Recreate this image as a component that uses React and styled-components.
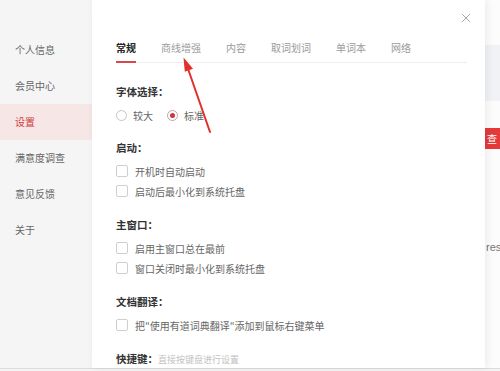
import React from "react";
import styled, { createGlobalStyle } from "styled-components";

const GlobalStyle = createGlobalStyle`
    html, body {
        margin: 0;
        padding: 0;
        background: #fff;
    }
    body {
        font-family: "Noto Sans CJK SC", "Noto Sans", sans-serif;
    }
`;

const Page = styled.div`
    position: relative;
    width: 500px;
    height: 371px;
    overflow: hidden;
    display: flex;
    flex-direction: column;
    background: #fff;
`;

const Main = styled.div`
    display: flex;
    height: 368px;
`;

const Sidebar = styled.div`
    width: 92px;
    flex-shrink: 0;
    background: #f5f5f5;
    padding-top: 32px;
    box-sizing: border-box;
`;

const NavItem = styled.div`
    height: 36px;
    line-height: 36px;
    padding-left: 15px;
    font-size: 10px;
    color: ${props => (props.active ? "#d23a3a" : "#666")};
    background: ${props => (props.active ? "#f6e6e6" : "transparent")};
`;

const Dialog = styled.div`
    position: relative;
    width: 393px;
    flex-shrink: 0;
    background: #fff;
    box-shadow: 2px 0 8px rgba(0, 0, 0, 0.07);
    padding: 0 18px 0 24px;
    box-sizing: border-box;
    z-index: 1;
`;

const Header = styled.div`
    display: flex;
    justify-content: flex-end;
    height: 26px;
    padding-top: 6px;
    box-sizing: border-box;
`;

const Close = styled.div`
    width: 14px;
    height: 14px;
    margin-right: -6px;
`;

const Tabs = styled.div`
    display: flex;
    gap: 25px;
    margin-top: 15px;
    border-bottom: 1px solid #eeeeee;
`;

const Tab = styled.div`
    position: relative;
    font-size: 10px;
    line-height: 14px;
    padding-bottom: 7px;
    color: ${props => (props.active ? "#222" : "#9a9a9a")};
    font-weight: ${props => (props.active ? 700 : 400)};
    &::after {
        content: "";
        position: absolute;
        left: 0;
        right: 0;
        bottom: -1px;
        height: 2px;
        background: ${props => (props.active ? "#d9484a" : "transparent")};
    }
`;

const Section = styled.div`
    margin-top: ${props => props.top}px;
`;

const Title = styled.div`
    font-size: 10.5px;
    line-height: 14px;
    font-weight: 700;
    color: #333;
    margin-bottom: 6px;
`;

const Hint = styled.span`
    font-weight: 400;
    font-size: 9px;
    color: #c2c2c2;
`;

const Row = styled.div`
    display: flex;
    align-items: center;
    height: 20px;
    font-size: 10px;
    color: #666;
`;

const RadioOption = styled.div`
    display: flex;
    align-items: center;
    margin-right: 14px;
`;

const Radio = styled.span`
    width: 11px;
    height: 11px;
    border-radius: 50%;
    border: 1px solid ${props => (props.checked ? "#c8a0a0" : "#c4c4c4")};
    box-sizing: border-box;
    margin-right: 6px;
    display: flex;
    align-items: center;
    justify-content: center;
    &::after {
        content: "";
        width: 5px;
        height: 5px;
        border-radius: 50%;
        background: ${props => (props.checked ? "#c9363b" : "transparent")};
    }
`;

const Checkbox = styled.span`
    width: 12px;
    height: 12px;
    border: 1px solid #cfcfcf;
    border-radius: 2px;
    box-sizing: border-box;
    margin-right: 7px;
`;

const RightStrip = styled.div`
    flex: 1;
    position: relative;
    background: #fcfcfc;
    display: flex;
    flex-direction: column;
`;

const GreyBand = styled.div`
    margin-top: 45px;
    height: 56px;
    background: #f0f2f5;
`;

const RedButton = styled.div`
    margin-top: 27px;
    height: 21px;
    background: #e53a3a;
    color: #fff;
    font-size: 10px;
    line-height: 21px;
    padding-left: 2px;
`;

const CutText = styled.div`
    margin-top: 92px;
    font-family: "Liberation Sans", Arial, sans-serif;
    font-size: 11px;
    color: #777;
    white-space: nowrap;
    overflow: hidden;
    padding-left: 1px;
`;

const BottomBar = styled.div`
    height: 3px;
    border-top: 1px solid #dcdcdc;
    background: #f4f4f4;
`;

const ArrowLayer = styled.svg`
    position: absolute;
    left: 0;
    top: 0;
    pointer-events: none;
    z-index: 5;
`;

const navItems = ["个人信息", "会员中心", "设置", "满意度调查", "意见反馈", "关于"];
const tabs = ["常规", "商线增强", "内容", "取词划词", "单词本", "网络"];

const CheckRow = ({ children }) => (
    <Row>
        <Checkbox />
        {children}
    </Row>
);

export default function App() {
    return (
        <>
            <GlobalStyle />
            <Page>
                <Main>
                    <Sidebar>
                        {navItems.map(item => (
                            <NavItem key={item} active={item === "设置"}>
                                {item}
                            </NavItem>
                        ))}
                    </Sidebar>
                    <Dialog>
                        <Header>
                            <Close>
                                <svg width="14" height="14" viewBox="0 0 14 14">
                                    <path d="M3 3 L11 11 M11 3 L3 11" stroke="#a8a8a8" strokeWidth="1" fill="none" />
                                </svg>
                            </Close>
                        </Header>
                        <Tabs>
                            {tabs.map(t => (
                                <Tab key={t} active={t === "常规"}>
                                    {t}
                                </Tab>
                            ))}
                        </Tabs>
                        <Section top={22}>
                            <Title>字体选择：</Title>
                            <Row>
                                <RadioOption>
                                    <Radio />
                                    较大
                                </RadioOption>
                                <RadioOption>
                                    <Radio checked />
                                    标准
                                </RadioOption>
                            </Row>
                        </Section>
                        <Section top={16}>
                            <Title>启动：</Title>
                            <CheckRow>开机时自动启动</CheckRow>
                            <CheckRow>启动后最小化到系统托盘</CheckRow>
                        </Section>
                        <Section top={17}>
                            <Title>主窗口：</Title>
                            <CheckRow>启用主窗口总在最前</CheckRow>
                            <CheckRow>窗口关闭时最小化到系统托盘</CheckRow>
                        </Section>
                        <Section top={17}>
                            <Title>文档翻译：</Title>
                            <CheckRow>把"使用有道词典翻译"添加到鼠标右键菜单</CheckRow>
                        </Section>
                        <Section top={17}>
                            <Title>
                                快捷键：<Hint>直接按键盘进行设置</Hint>
                            </Title>
                        </Section>
                    </Dialog>
                    <RightStrip>
                        <GreyBand />
                        <RedButton>查</RedButton>
                        <CutText>res</CutText>
                    </RightStrip>
                </Main>
                <BottomBar />
                <ArrowLayer width="500" height="371" viewBox="0 0 500 371">
                    <path d="M210 132 L188.6 70.5" stroke="#e3302b" strokeWidth="2" strokeLinecap="round" />
                    <polygon points="183.5,57.5 193,68.8 184.8,71.8" fill="#e3302b" />
                </ArrowLayer>
            </Page>
        </>
    );
}
